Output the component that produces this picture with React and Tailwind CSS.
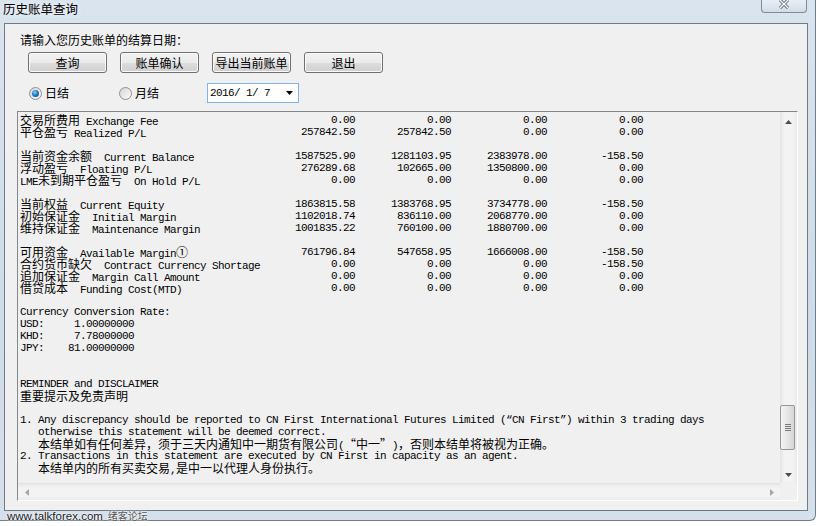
import React from 'react'

const rows = [
  { cn: '交易所费用', en: ' Exchange Fee', vals: ['0.00', '0.00', '0.00', '0.00'] },
  { cn: '平仓盈亏', en: ' Realized P/L', vals: ['257842.50', '257842.50', '0.00', '0.00'] },
  null,
  { cn: '当前资金余额', en: '  Current Balance', vals: ['1587525.90', '1281103.95', '2383978.00', '-158.50'] },
  { cn: '浮动盈亏', en: '  Floating P/L', vals: ['276289.68', '102665.00', '1350800.00', '0.00'] },
  { pre: 'LME', cn: '未到期平仓盈亏', en: '  On Hold P/L', vals: ['0.00', '0.00', '0.00', '0.00'] },
  null,
  { cn: '当前权益', en: '  Current Equity', vals: ['1863815.58', '1383768.95', '3734778.00', '-158.50'] },
  { cn: '初始保证金', en: '  Initial Margin', vals: ['1102018.74', '836110.00', '2068770.00', '0.00'] },
  { cn: '维持保证金', en: '  Maintenance Margin', vals: ['1001835.22', '760100.00', '1880700.00', '0.00'] },
  null,
  { cn: '可用资金', en: '  Available Margin', tail: '①', vals: ['761796.84', '547658.95', '1666008.00', '-158.50'] },
  { cn: '合约货币缺欠', en: '  Contract Currency Shortage', vals: ['0.00', '0.00', '0.00', '-158.50'] },
  { cn: '追加保证金', en: '  Margin Call Amount', vals: ['0.00', '0.00', '0.00', '0.00'] },
  { cn: '借贷成本', en: '  Funding Cost(MTD)', vals: ['0.00', '0.00', '0.00', '0.00'] },
]

function C({ children }) {
  return <span className="font-['Noto_Sans_CJK_SC',sans-serif] text-[12px] tracking-normal">{children}</span>
}

function Line({ children }) {
  return <div className="h-[12px] whitespace-pre">{children}</div>
}

function Button({ children }) {
  return (
    <div className="w-[79px] h-[21px] rounded-[3px] border border-[#707070] bg-[linear-gradient(#f2f2f2_0%,#ebebeb_50%,#dddddd_51%,#cfcfcf_100%)] shadow-[inset_0_0_0_1px_#fbfbfb] flex items-center justify-center text-[12px] leading-none text-black">
      {children}
    </div>
  )
}

function Radio({ checked }) {
  return (
    <span className="w-[13px] h-[13px] rounded-full border border-[#8e8f8f] bg-[linear-gradient(135deg,#d6d6d6,#fbfbfb)] flex items-center justify-center">
      {checked && (
        <span className="w-[7px] h-[7px] rounded-full bg-[radial-gradient(circle_at_40%_35%,#8fd4f8,#1f7cc4_45%,#083f80)]" />
      )}
    </span>
  )
}

function Arrow({ dir, color }) {
  const pts = {
    up: '0,4 3.5,0 7,4',
    down: '0,0 7,0 3.5,4',
    left: '4,0 4,7 0,3.5',
    right: '0,0 4,3.5 0,7',
  }[dir]
  const horiz = dir === 'left' || dir === 'right'
  return (
    <svg width={horiz ? 4 : 7} height={horiz ? 7 : 4} viewBox={horiz ? '0 0 4 7' : '0 0 7 4'}>
      <polygon points={pts} fill={color} />
    </svg>
  )
}

export default function App() {
  return (
    <div className="w-[819px] h-[526px] bg-white overflow-hidden relative font-['Noto_Sans_CJK_SC',sans-serif]">
      <div className="w-[816px] h-[521px] bg-[linear-gradient(180deg,#d9e4ef,#cfdbe8_60%,#d6e0eb)] border-r border-b border-[#6f7d8c] rounded-br-[6px] flex flex-col">
        {/* title bar */}
        <div className="h-[23px] flex items-start justify-between">
          <div className="pl-[3px] pt-[1px] text-[12.5px] leading-[16px] text-black [text-shadow:0_0_6px_#ffffff]">历史账单查询</div>
          <div className="w-[46px] h-[13px] mr-[8px] border border-t-0 border-[#7d8b9b] rounded-b-[4px] bg-[linear-gradient(#e8eef5,#d3dce7)] flex items-start justify-center">
            <svg width="10" height="9" viewBox="0 0 10 9">
              <path d="M1 0 L9 8 M9 0 L1 8" stroke="#4a5563" strokeWidth="3" />
              <path d="M1 0 L9 8 M9 0 L1 8" stroke="#ffffff" strokeWidth="1.4" />
            </svg>
          </div>
        </div>

        {/* client area */}
        <div className="ml-[4px] w-[804px] h-[488px] border border-[#6e7b89] bg-[#f0f0f0] flex flex-col">
          <div className="mt-[8px] pl-[15px] text-[12px] leading-[16px] text-black">请输入您历史账单的结算日期：</div>

          <div className="mt-[4px] pl-[23px] flex gap-[13px]">
            <Button>查询</Button>
            <Button>账单确认</Button>
            <Button>导出当前账单</Button>
            <Button>退出</Button>
          </div>

          <div className="mt-[10px] h-[20px] flex items-center text-[12px] text-black">
            <span className="ml-[24px]"><Radio checked /></span>
            <span className="ml-[3px]">日结</span>
            <span className="ml-[50px]"><Radio /></span>
            <span className="ml-[3px]">月结</span>
            <div className="ml-[48px] w-[92px] h-[20px] border border-[#7eb4ea] bg-white flex items-center justify-between pl-[2px] pr-[5px]">
              <span className="font-['Liberation_Mono',monospace] text-[11px] tracking-[-0.6px] whitespace-pre">2016/ 1/ 7</span>
              <Arrow dir="down" color="#000000" />
            </div>
          </div>

          {/* statement text box */}
          <div className="mt-[8px] ml-[12px] w-[781px] h-[390px] border border-t-[#828790] border-l-[#828790] border-r-[#ffffff] border-b-[#ffffff] flex flex-col">
            <div className="flex flex-1 min-h-0">
              <div className="flex-1 overflow-hidden pl-[2px] pt-[2px] font-['Liberation_Mono','Noto_Sans_CJK_SC',monospace] text-[11px] tracking-[-0.6px] leading-[12px] text-black">
                {rows.map((r, i) =>
                  r ? (
                    <div key={i} className="flex h-[12px]">
                      <div className="w-[239px] whitespace-pre">
                        {r.pre}
                        <C>{r.cn}</C>
                        {r.en}
                        {r.tail && <C>{r.tail}</C>}
                      </div>
                      {r.vals.map((v, j) => (
                        <div key={j} className="w-[96px] text-right whitespace-pre">{v}</div>
                      ))}
                    </div>
                  ) : (
                    <div key={i} className="h-[12px]" />
                  )
                )}
                <Line />
                <Line>Currency Conversion Rate:</Line>
                <Line>USD:     1.00000000</Line>
                <Line>KHD:     7.78000000</Line>
                <Line>JPY:    81.00000000</Line>
                <Line />
                <Line />
                <Line>REMINDER and DISCLAIMER</Line>
                <Line><C>重要提示及免责声明</C></Line>
                <Line />
                <Line>1. Any discrepancy should be reported to CN First International Futures Limited (“CN First”) within 3 trading days</Line>
                <Line>   otherwise this statement will be deemed correct.</Line>
                <Line>
                  {'   '}
                  <C>本结单如有任何差异，须于三天内通知中一期货有限公司</C>(
                  <span className="inline-block w-[12px] text-right"><C>“</C></span>
                  <C>中一</C>
                  <span className="inline-block w-[12px] text-left"><C>”</C></span>
                  )<C>，否则本结单将被视为正确。</C>
                </Line>
                <Line>2. Transactions in this statement are executed by CN First in capacity as an agent.</Line>
                <Line>
                  {'   '}
                  <C>本结单内的所有买卖交易</C>,<C>是中一以代理人身份执行。</C>
                </Line>
              </div>

              {/* vertical scrollbar */}
              <div className="w-[17px] flex flex-col bg-[linear-gradient(90deg,#e3e3e3,#f3f3f3_25%,#f3f3f3_75%,#e9e9e9)]">
                <div className="h-[17px] flex items-center justify-center pt-[3px]">
                  <Arrow dir="up" color="#4e4e4e" />
                </div>
                <div className="h-[276px]" />
                <div className="h-[45px] mr-[2px] rounded-[2px] border border-[#979797] bg-[linear-gradient(90deg,#f4f4f4,#e6e6e6_50%,#d6d6d6)] flex flex-col items-center justify-center gap-[1px]">
                  <span className="w-[6px] h-[1px] bg-[#7a7a7a]" />
                  <span className="w-[6px] h-[1px] bg-[#7a7a7a]" />
                  <span className="w-[6px] h-[1px] bg-[#7a7a7a]" />
                  <span className="w-[6px] h-[1px] bg-[#7a7a7a]" />
                </div>
                <div className="flex-1" />
                <div className="h-[17px] flex items-center justify-center">
                  <Arrow dir="down" color="#4e4e4e" />
                </div>
              </div>
            </div>

            {/* horizontal scrollbar */}
            <div className="h-[17px] flex">
              <div className="flex-1 flex items-center justify-between border-t border-[#e2e2e2] bg-[linear-gradient(180deg,#e8e8e8,#f3f3f3_25%,#f3f3f3_75%,#ebebeb)]">
                <div className="w-[17px] flex justify-center"><Arrow dir="left" color="#a6a6a6" /></div>
                <div className="w-[17px] flex justify-center"><Arrow dir="right" color="#a6a6a6" /></div>
              </div>
              <div className="w-[17px] bg-[#f0f0f0]" />
            </div>
          </div>
        </div>
      </div>

      {/* watermark */}
      <div className="absolute left-[7px] top-[509px] flex items-baseline gap-[5px] leading-[14px] [text-shadow:0_0_2px_#ffffff,0_0_2px_#ffffff]">
        <span className="font-['Liberation_Sans',sans-serif] text-[11.5px] text-[#1a1a1a]">www.talkforex.com</span>
        <span className="text-[10px] text-[#555555]">绪客论坛</span>
      </div>
    </div>
  )
}
